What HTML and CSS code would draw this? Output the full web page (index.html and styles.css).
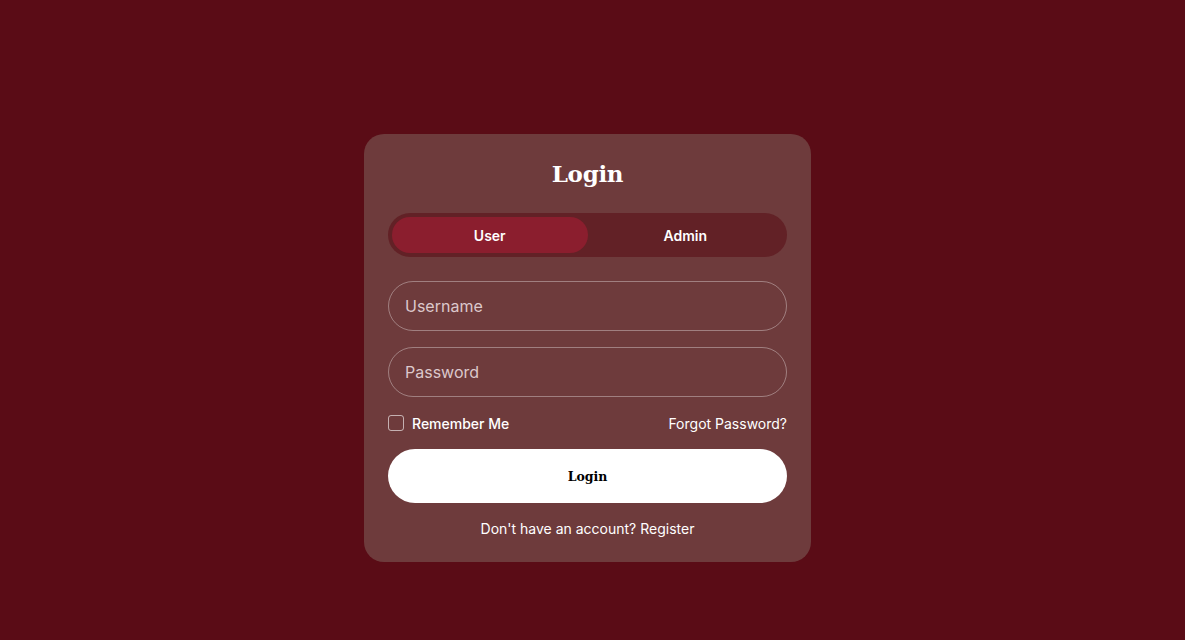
FILE: index.html
```html
<!DOCTYPE html>
<html lang="en">
<head>
    <meta charset="UTF-8">
    <meta name="viewport" content="width=device-width, initial-scale=1.0">
    <title>Login</title>
    <link rel="stylesheet" href="styles.css">
</head>
<body>
    <div class="login-card">
        <h2>Login</h2>
        <div class="role-toggle">
            <button class="role-btn active">User</button>
            <button class="role-btn">Admin</button>
        </div>
        <form class="login-form" onsubmit="return false">
            <input type="text" class="field" placeholder="Username">
            <input type="password" class="field" placeholder="Password">
            <div class="options">
                <label class="remember"><input type="checkbox"><span class="box"></span>Remember Me</label>
                <a href="#" class="forgot">Forgot Password?</a>
            </div>
            <button class="login-button">Login</button>
        </form>
        <p class="register">Don't have an account? <a href="#">Register</a></p>
    </div>
</body>
</html>
```

FILE: styles.css
```css
body {
    font-family: Inter, "Noto Sans", sans-serif;
    margin: 0;
    padding: 134px 10px 0 0;
    background-color: #5a0c16;
    color: white;
    height: 640px;
    box-sizing: border-box;
}
.login-card {
    width: 447px;
    box-sizing: border-box;
    margin: 0 auto;
    background: #6e3b3c;
    border-radius: 20px;
    padding: 24px 24px 24px;
    text-align: center;
}
h2 {
    font-family: "DejaVu Serif", Georgia, serif;
    font-size: 23px;
    line-height: 31px;
    margin: 0 0 24px;
    letter-spacing: -0.3px;
}
.role-toggle {
    display: flex;
    background: #622126;
    border-radius: 22px;
    padding: 4px;
    height: 44px;
    box-sizing: border-box;
}
.role-btn {
    flex: 1;
    border: none;
    background: none;
    color: white;
    font-family: Inter, sans-serif;
    font-size: 14px;
    font-weight: 600;
    border-radius: 18px;
    cursor: pointer;
}
.role-btn.active {
    background: #8b1e2e;
}
.login-form {
    display: flex;
    flex-direction: column;
    gap: 16px;
    margin-top: 24px;
}
.field {
    height: 50px;
    box-sizing: border-box;
    border: 1px solid rgba(255, 255, 255, 0.35);
    border-radius: 25px;
    background: transparent;
    padding: 0 16px;
    font-family: Inter, sans-serif;
    font-size: 16px;
    color: white;
    outline: none;
}
.field::placeholder {
    color: #dcc8cb;
}
.options {
    display: flex;
    justify-content: space-between;
    align-items: center;
    font-size: 14px;
    height: 20px;
}
.remember {
    display: flex;
    align-items: center;
    gap: 8px;
    font-weight: 500;
    cursor: pointer;
}
.remember input {
    display: none;
}
.box {
    width: 14px;
    height: 14px;
    border: 1px solid rgba(255, 255, 255, 0.6);
    border-radius: 3px;
}
.forgot {
    color: white;
    text-decoration: none;
}
.login-button {
    height: 54px;
    border: none;
    border-radius: 27px;
    background: white;
    color: black;
    font-family: "DejaVu Serif", Georgia, serif;
    font-weight: bold;
    font-size: 12.5px;
    cursor: pointer;
}
.register {
    font-size: 14px;
    margin: 17px 0 0;
    line-height: 18px;
}
.register a {
    color: white;
    text-decoration: none;
}
```
